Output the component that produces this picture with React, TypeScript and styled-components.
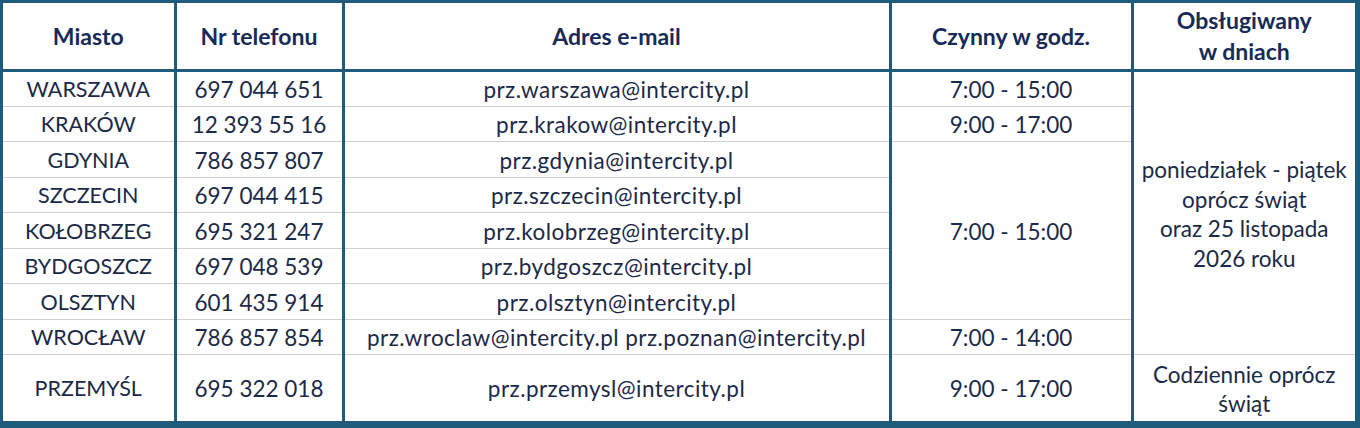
import React from "react";
import styled, { createGlobalStyle } from "styled-components";

const GlobalStyle = createGlobalStyle`
  html, body {
    margin: 0;
    padding: 0;
    background: #ffffff;
  }
  body {
    font-family: Lato, "Noto Sans", "Liberation Sans", sans-serif;
  }
`;

const LINE = "#1f5b7a";
const GRID = "#cfcfcf";
const TEXT = "#1b2948";

const Frame = styled.div`
  width: 1360px;
  height: 428px;
  box-sizing: border-box;
  background: ${LINE};
  padding: 3px 5px 7px 3px;
`;

const Table = styled.table`
  width: 1352px;
  height: 418px;
  border-collapse: collapse;
  table-layout: fixed;
  background: #ffffff;
`;

const HeadCell = styled.th`
  height: 66px;
  padding: 0 2px;
  font-weight: 700;
  font-size: 23px;
  line-height: 31px;
  color: #172a58;
  text-align: center;
  vertical-align: middle;
  border-bottom: 3px solid ${LINE};
  border-left: 3px solid ${LINE};
  &:first-child {
    border-left: none;
  }
`;

type Kind = "city" | "mail" | "plain";

const Cell = styled.td<{ $kind?: Kind }>`
  padding: 2px 2px 0;
  font-size: ${(p) => (p.$kind === "city" ? "21.5px" : "22.5px")};
  line-height: 29.5px;
  letter-spacing: ${(p) => (p.$kind === "mail" ? "0.45px" : "0")};
  color: ${TEXT};
  text-align: center;
  vertical-align: middle;
  white-space: nowrap;
  border-top: 1px solid ${GRID};
  border-left: 3px solid ${LINE};
  &:first-child {
    border-left: none;
  }
`;

const Row = styled.tr<{ $tall?: boolean }>`
  height: ${(p) => (p.$tall ? "66px" : "35.5px")};
`;

const Wrap = styled.span`
  white-space: normal;
  display: block;
`;

type Office = { city: string; phone: string; email: string };

const offices: Office[] = [
  { city: "WARSZAWA", phone: "697 044 651", email: "prz.warszawa@intercity.pl" },
  { city: "KRAKÓW", phone: "12 393 55 16", email: "prz.krakow@intercity.pl" },
  { city: "GDYNIA", phone: "786 857 807", email: "prz.gdynia@intercity.pl" },
  { city: "SZCZECIN", phone: "697 044 415", email: "prz.szczecin@intercity.pl" },
  { city: "KOŁOBRZEG", phone: "695 321 247", email: "prz.kolobrzeg@intercity.pl" },
  { city: "BYDGOSZCZ", phone: "697 048 539", email: "prz.bydgoszcz@intercity.pl" },
  { city: "OLSZTYN", phone: "601 435 914", email: "prz.olsztyn@intercity.pl" },
  {
    city: "WROCŁAW",
    phone: "786 857 854",
    email: "prz.wroclaw@intercity.pl prz.poznan@intercity.pl",
  },
];

// opening hours, keyed by the first row they cover
const hours: Record<number, { span: number; text: string }> = {
  0: { span: 1, text: "7:00 - 15:00" },
  1: { span: 1, text: "9:00 - 17:00" },
  2: { span: 5, text: "7:00 - 15:00" },
  7: { span: 1, text: "7:00 - 14:00" },
};

const App = () => {
  return (
    <>
      <GlobalStyle />
      <Frame>
        <Table>
          <colgroup>
            <col style={{ width: 172 }} />
            <col style={{ width: 168 }} />
            <col style={{ width: 547 }} />
            <col style={{ width: 242 }} />
            <col style={{ width: 223 }} />
          </colgroup>
          <thead>
            <tr>
              <HeadCell>Miasto</HeadCell>
              <HeadCell>Nr telefonu</HeadCell>
              <HeadCell>Adres e-mail</HeadCell>
              <HeadCell>Czynny w godz.</HeadCell>
              <HeadCell>
                Obsługiwany
                <br />w dniach
              </HeadCell>
            </tr>
          </thead>
          <tbody>
            {offices.map((o, i) => (
              <Row key={o.city}>
                <Cell $kind="city">{o.city}</Cell>
                <Cell>{o.phone}</Cell>
                <Cell $kind="mail">{o.email}</Cell>
                {hours[i] && <Cell rowSpan={hours[i].span}>{hours[i].text}</Cell>}
                {i === 0 && (
                  <Cell rowSpan={8}>
                    poniedziałek - piątek
                    <br />
                    oprócz świąt
                    <br />
                    oraz 25 listopada
                    <br />
                    2026 roku
                  </Cell>
                )}
              </Row>
            ))}
            <Row $tall>
              <Cell $kind="city">PRZEMYŚL</Cell>
              <Cell>695 322 018</Cell>
              <Cell $kind="mail">prz.przemysl@intercity.pl</Cell>
              <Cell>9:00 - 17:00</Cell>
              <Cell>
                <Wrap>Codziennie oprócz świąt</Wrap>
              </Cell>
            </Row>
          </tbody>
        </Table>
      </Frame>
    </>
  );
};

export default App;
